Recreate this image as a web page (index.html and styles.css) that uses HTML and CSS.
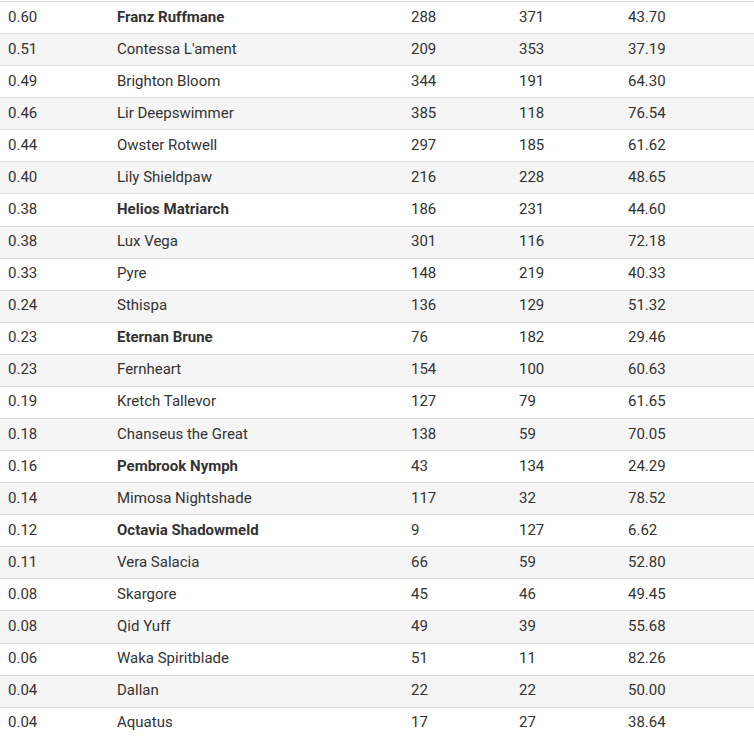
FILE: index.html
```html
<!DOCTYPE html>
<html>
<head>
<meta charset="utf-8">
<link rel="stylesheet" href="styles.css">
</head>
<body>
<table class="stats">
<colgroup>
<col class="c1"><col class="c2"><col class="c3"><col class="c4"><col class="c5">
</colgroup>
<tbody>
<tr><td>0.60</td><td class="hl">Franz Ruffmane</td><td>288</td><td>371</td><td>43.70</td></tr>
<tr><td>0.51</td><td>Contessa L'ament</td><td>209</td><td>353</td><td>37.19</td></tr>
<tr><td>0.49</td><td>Brighton Bloom</td><td>344</td><td>191</td><td>64.30</td></tr>
<tr><td>0.46</td><td>Lir Deepswimmer</td><td>385</td><td>118</td><td>76.54</td></tr>
<tr><td>0.44</td><td>Owster Rotwell</td><td>297</td><td>185</td><td>61.62</td></tr>
<tr><td>0.40</td><td>Lily Shieldpaw</td><td>216</td><td>228</td><td>48.65</td></tr>
<tr><td>0.38</td><td class="hl">Helios Matriarch</td><td>186</td><td>231</td><td>44.60</td></tr>
<tr><td>0.38</td><td>Lux Vega</td><td>301</td><td>116</td><td>72.18</td></tr>
<tr><td>0.33</td><td>Pyre</td><td>148</td><td>219</td><td>40.33</td></tr>
<tr><td>0.24</td><td>Sthispa</td><td>136</td><td>129</td><td>51.32</td></tr>
<tr><td>0.23</td><td class="hl">Eternan Brune</td><td>76</td><td>182</td><td>29.46</td></tr>
<tr><td>0.23</td><td>Fernheart</td><td>154</td><td>100</td><td>60.63</td></tr>
<tr><td>0.19</td><td>Kretch Tallevor</td><td>127</td><td>79</td><td>61.65</td></tr>
<tr><td>0.18</td><td>Chanseus the Great</td><td>138</td><td>59</td><td>70.05</td></tr>
<tr><td>0.16</td><td class="hl">Pembrook Nymph</td><td>43</td><td>134</td><td>24.29</td></tr>
<tr><td>0.14</td><td>Mimosa Nightshade</td><td>117</td><td>32</td><td>78.52</td></tr>
<tr><td>0.12</td><td class="hl">Octavia Shadowmeld</td><td>9</td><td>127</td><td>6.62</td></tr>
<tr><td>0.11</td><td>Vera Salacia</td><td>66</td><td>59</td><td>52.80</td></tr>
<tr><td>0.08</td><td>Skargore</td><td>45</td><td>46</td><td>49.45</td></tr>
<tr><td>0.08</td><td>Qid Yuff</td><td>49</td><td>39</td><td>55.68</td></tr>
<tr><td>0.06</td><td>Waka Spiritblade</td><td>51</td><td>11</td><td>82.26</td></tr>
<tr><td>0.04</td><td>Dallan</td><td>22</td><td>22</td><td>50.00</td></tr>
<tr><td>0.04</td><td>Aquatus</td><td>17</td><td>27</td><td>38.64</td></tr>
</tbody>
</table>
</body>
</html>
```
FILE: styles.css
```css
html, body {
  margin: 0;
  padding: 0;
  background: #fff;
}
body {
  padding-top: 1px;
  font-family: Roboto, "Liberation Sans", sans-serif;
  font-size: 15px;
  color: #333;
  overflow: hidden;
}
.stats {
  width: 754px;
  border-collapse: collapse;
  table-layout: fixed;
}
.c1 { width: 109px; }
.c2 { width: 294px; }
.c3 { width: 108px; }
.c4 { width: 109px; }
.c5 { width: 134px; }
.stats td {
  height: 29.09px;
  padding: 0 8px 2px;
  border-top: 1px solid #ddd;
  vertical-align: middle;
  line-height: 16px;
  white-space: nowrap;
}
.stats tr:nth-child(even) td {
  background: #f5f5f5;
}
.stats td.hl {
  font-weight: bold;
}
```
